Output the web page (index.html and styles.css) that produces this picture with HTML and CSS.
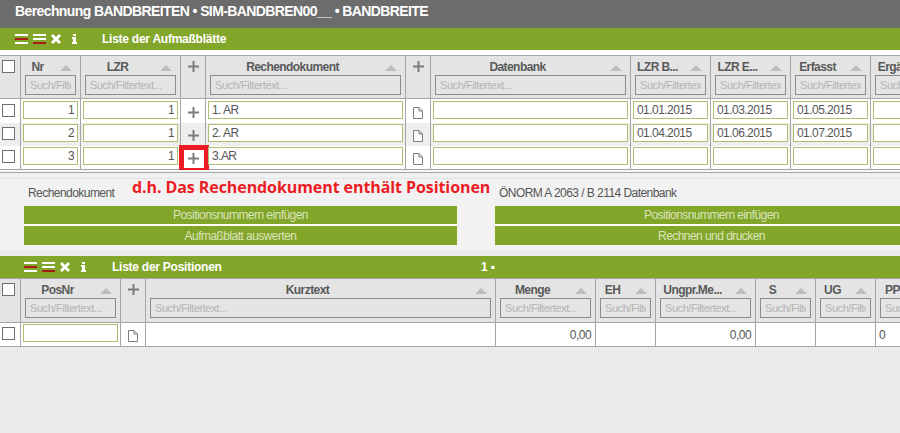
FILE: index.html
```html
<!DOCTYPE html>
<html lang="de">
<head>
<meta charset="utf-8">
<title>Berechnung BANDBREITEN</title>
<link rel="stylesheet" href="styles.css">
</head>
<body>
<svg class="defs" width="0" height="0" aria-hidden="true">
  <defs>
    <symbol id="i-collapse" viewBox="0 0 13 10"><rect y="0" width="13" height="2" fill="#fff"/><rect y="4" width="13" height="2" fill="#a81c14"/><rect y="8" width="13" height="2" fill="#fff"/></symbol>
    <symbol id="i-expand" viewBox="0 0 13 10"><rect y="0" width="13" height="2" fill="#fff"/><rect y="4" width="13" height="2" fill="#fff"/><rect y="8" width="13" height="2" fill="#a81c14"/></symbol>
    <symbol id="i-close" viewBox="0 0 10 10"><path d="M2 0 5 3 8 0 10 2 7 5 10 8 8 10 5 7 2 10 0 8 3 5 0 2Z" fill="#fff"/></symbol>
    <symbol id="i-info" viewBox="0 0 5 10"><path d="M1 0H4V2H1ZM0 3H4V8H5V10H0V8H1V5H0Z" fill="#fff"/></symbol>
    <symbol id="i-plus" viewBox="0 0 11 11"><path d="M4.5 0H6.5V4.5H11V6.5H6.5V11H4.5V6.5H0V4.5H4.5Z" fill="#7d7d7d"/></symbol>
    <symbol id="i-doc" viewBox="0 0 10 12"><path d="M.5.5H6L9.5 4V11.5H.5ZM6 .5V4H9.5" fill="#fff" stroke="#7d7d7d"/></symbol>
  </defs>
</svg>

<header class="titlebar">Berechnung BANDBREITEN • SIM-BANDBREN00__ • BANDBREITE</header>

<section class="list">
  <div class="toolbar toolbar-first">
    <div class="tools">
      <svg class="ic-bars"><use href="#i-collapse"/></svg>
      <svg class="ic-bars"><use href="#i-expand"/></svg>
      <svg class="ic-x"><use href="#i-close"/></svg>
      <svg class="ic-i"><use href="#i-info"/></svg>
    </div>
    <span class="toolbar-title">Liste der Aufmaßblätte</span>
  </div>
  <div class="table">
    <div class="row head cols-a">
      <div class="cell cb"><span class="check"></span></div>
      <div class="cell hc"><div class="ht">Nr</div><span class="sort"></span><input class="filter" placeholder="Such/Filtertext..."></div>
      <div class="cell hc"><div class="ht">LZR</div><span class="sort"></span><input class="filter" placeholder="Such/Filtertext..."></div>
      <div class="cell hp"><svg class="ic-plus"><use href="#i-plus"/></svg></div>
      <div class="cell hc"><div class="ht">Rechendokument</div><span class="sort"></span><input class="filter" placeholder="Such/Filtertext..."></div>
      <div class="cell hp"><svg class="ic-plus"><use href="#i-plus"/></svg></div>
      <div class="cell hc"><div class="ht">Datenbank</div><span class="sort"></span><input class="filter" placeholder="Such/Filtertext..."></div>
      <div class="cell hc"><div class="ht">LZR B...</div><span class="sort"></span><input class="filter" placeholder="Such/Filtertext..."></div>
      <div class="cell hc"><div class="ht">LZR E...</div><span class="sort"></span><input class="filter" placeholder="Such/Filtertext..."></div>
      <div class="cell hc"><div class="ht">Erfasst</div><span class="sort"></span><input class="filter" placeholder="Such/Filtertext..."></div>
      <div class="cell hc"><div class="ht">Ergän...</div><span class="sort"></span><input class="filter" placeholder="Such/Filtertext..."></div>
    </div>
    <div class="row body cols-a r1">
      <div class="cell cb"><span class="check"></span></div>
      <div class="cell"><input class="field num" value="1"></div>
      <div class="cell"><input class="field num" value="1"></div>
      <div class="cell ico"><svg class="ic-plus"><use href="#i-plus"/></svg></div>
      <div class="cell"><input class="field" value="1. AR"></div>
      <div class="cell ico"><svg class="ic-doc"><use href="#i-doc"/></svg></div>
      <div class="cell"><input class="field"></div>
      <div class="cell"><input class="field" value="01.01.2015"></div>
      <div class="cell"><input class="field" value="01.03.2015"></div>
      <div class="cell"><input class="field" value="01.05.2015"></div>
      <div class="cell"><input class="field"></div>
    </div>
    <div class="row body cols-a alt">
      <div class="cell cb"><span class="check"></span></div>
      <div class="cell"><input class="field num" value="2"></div>
      <div class="cell"><input class="field num" value="1"></div>
      <div class="cell ico"><svg class="ic-plus"><use href="#i-plus"/></svg></div>
      <div class="cell"><input class="field" value="2. AR"></div>
      <div class="cell ico"><svg class="ic-doc"><use href="#i-doc"/></svg></div>
      <div class="cell"><input class="field"></div>
      <div class="cell"><input class="field" value="01.04.2015"></div>
      <div class="cell"><input class="field" value="01.06.2015"></div>
      <div class="cell"><input class="field" value="01.07.2015"></div>
      <div class="cell"><input class="field"></div>
    </div>
    <div class="row body cols-a last">
      <div class="cell cb"><span class="check"></span></div>
      <div class="cell"><input class="field num" value="3"></div>
      <div class="cell"><input class="field num" value="1"></div>
      <div class="cell ico"><svg class="ic-plus"><use href="#i-plus"/></svg><span class="redbox"></span></div>
      <div class="cell"><input class="field" value="3.AR"></div>
      <div class="cell ico"><svg class="ic-doc"><use href="#i-doc"/></svg></div>
      <div class="cell"><input class="field"></div>
      <div class="cell"><input class="field"></div>
      <div class="cell"><input class="field"></div>
      <div class="cell"><input class="field"></div>
      <div class="cell"><input class="field"></div>
    </div>
  </div>
  <div class="gap"></div>
  <div class="rule"></div>
</section>

<section class="panel">
  <div class="panel-col">
    <div class="panel-head">
      <span class="panel-label">Rechendokument</span>
      <span class="note">d.h. Das Rechendokument enthält Positionen</span>
    </div>
    <button class="action">Positionsnummern einfügen</button>
    <button class="action">Aufmaßblatt auswerten</button>
  </div>
  <div class="panel-col">
    <div class="panel-head">
      <span class="panel-label">ÖNORM A 2063 / B 2114 Datenbank</span>
    </div>
    <button class="action">Positionsnummern einfügen</button>
    <button class="action">Rechnen und drucken</button>
  </div>
</section>

<section class="list">
  <div class="toolbar toolbar-second">
    <div class="tools">
      <svg class="ic-bars"><use href="#i-collapse"/></svg>
      <svg class="ic-bars"><use href="#i-expand"/></svg>
      <svg class="ic-x"><use href="#i-close"/></svg>
      <svg class="ic-i"><use href="#i-info"/></svg>
    </div>
    <span class="toolbar-title">Liste der Positionen</span>
    <span class="pager">1 ▪</span>
  </div>
  <div class="table">
    <div class="row head head-tall cols-b">
      <div class="cell cb"><span class="check"></span></div>
      <div class="cell hc"><div class="ht">PosNr</div><span class="sort"></span><input class="filter" placeholder="Such/Filtertext..."></div>
      <div class="cell hp"><svg class="ic-plus"><use href="#i-plus"/></svg></div>
      <div class="cell hc"><div class="ht">Kurztext</div><span class="sort"></span><input class="filter" placeholder="Such/Filtertext..."></div>
      <div class="cell hc"><div class="ht">Menge</div><span class="sort"></span><input class="filter" placeholder="Such/Filtertext..."></div>
      <div class="cell hc"><div class="ht">EH</div><span class="sort"></span><input class="filter" placeholder="Such/Filtertext..."></div>
      <div class="cell hc"><div class="ht">Ungpr.Me...</div><span class="sort"></span><input class="filter" placeholder="Such/Filtertext..."></div>
      <div class="cell hc"><div class="ht">S</div><span class="sort"></span><input class="filter" placeholder="Such/Filtertext..."></div>
      <div class="cell hc"><div class="ht">UG</div><span class="sort"></span><input class="filter" placeholder="Such/Filtertext..."></div>
      <div class="cell hc"><div class="ht">PP</div><span class="sort"></span><input class="filter" placeholder="Such/Filtertext..."></div>
    </div>
    <div class="row body cols-b last">
      <div class="cell cb"><span class="check"></span></div>
      <div class="cell"><input class="field"></div>
      <div class="cell ico"><svg class="ic-doc"><use href="#i-doc"/></svg></div>
      <div class="cell"></div>
      <div class="cell val num">0,00</div>
      <div class="cell"></div>
      <div class="cell val num">0,00</div>
      <div class="cell"></div>
      <div class="cell"></div>
      <div class="cell val">0</div>
    </div>
  </div>
</section>
</body>
</html>
```

FILE: styles.css
```css
* { box-sizing: border-box; }

html, body {
  margin: 0;
  height: 100%;
  overflow: hidden;
}

body {
  width: 900px;
  background: #ebebeb;
  font-family: "Liberation Sans", Arial, sans-serif;
  font-size: 12px;
  letter-spacing: -0.55px;
  color: #555;
}

.defs { position: absolute; }

.titlebar {
  height: 28px;
  padding: 3px 0 0 15px;
  background: #6c6c6c;
  color: #fff;
  font-size: 14px;
  font-weight: bold;
  letter-spacing: -0.6px;
  line-height: 16px;
  white-space: nowrap;
}

.list { background: #fff; }

.toolbar {
  display: flex;
  align-items: center;
  height: 22px;
  background: #82a62a;
  color: #fff;
  font-weight: bold;
  letter-spacing: -0.25px;
  white-space: nowrap;
}

.toolbar-first { margin-bottom: 5px; padding-left: 15px; }
.toolbar-second { padding-left: 24px; }
.toolbar-second .toolbar-title { margin-left: 1px; }

.tools {
  display: flex;
  align-items: center;
  width: 87px;
}

.ic-bars { width: 13px; height: 10px; margin-right: 5px; }
.ic-x { width: 10px; height: 10px; margin-right: 11px; }
.ic-i { width: 5px; height: 10px; }

.toolbar-title { width: 369px; }

.table {
  width: 900px;
  overflow: hidden;
  border-top: 1px solid #a6a6a6;
}

.row { display: grid; }

.cols-a { grid-template-columns: 21px 60px 100px 25px 200px 25px 200px 80px 80px 80px 80px; }
.cols-b { grid-template-columns: 21px 100px 25px 350px 100px 60px 100px 60px 60px 60px; }

.cell {
  position: relative;
  border-right: 1px solid #a6a6a6;
  min-width: 0;
}

.head {
  height: 43px;
  background: #e4e4e4;
  border-bottom: 1px solid #a6a6a6;
}

.head-tall { height: 44px; }

.body { height: 23px; background: #fff; }
.r1 { height: 24px; }
.alt { background: #eee; }
.last { height: 24px; border-bottom: 1px solid #a6a6a6; }

.hc { padding: 4px 4px 0; }

.ht {
  height: 15px;
  padding-right: 26px;
  font-weight: bold;
  letter-spacing: -0.57px;
  line-height: 15px;
  text-align: center;
  white-space: nowrap;
  color: #5a5a5a;
}

.sort {
  position: absolute;
  top: 9px;
  right: 8px;
  width: 0;
  height: 0;
  border-left: 6px solid transparent;
  border-right: 6px solid transparent;
  border-bottom: 6px solid #bdbdbd;
}

.filter {
  display: block;
  width: 100%;
  height: 20px;
  padding: 0 4px;
  margin: 0;
  border: 1px solid #8c8c8c;
  border-radius: 0;
  outline: 0;
  background: transparent;
  font: 11px "Liberation Sans", Arial, sans-serif;
  letter-spacing: -0.43px;
}

.filter::placeholder { color: #b4b4b4; opacity: 1; }

.field {
  display: block;
  width: calc(100% - 4px);
  height: 18px;
  margin: 1px 0 0 2px;
  padding: 0 3px;
  border: 1px solid #a9c170;
  border-radius: 0;
  outline: 0;
  background: #fff;
  color: #555;
  font: 12px "Liberation Sans", Arial, sans-serif;
  letter-spacing: -0.55px;
}

.r1 .field { margin-top: 2px; }
.field.num { text-align: right; }

.cb { padding: 4px 0 0 2px; }
.r1 .cb { padding-top: 5px; }

.check {
  display: block;
  width: 13px;
  height: 13px;
  border: 1px solid #6f6f6f;
  background: #fff;
}

.hp { display: flex; justify-content: center; padding-top: 5px; }
.ico { display: flex; justify-content: center; padding-top: 7px; }
.r1 .ico { padding-top: 8px; }
.ic-plus { width: 11px; height: 11px; }
.ic-doc { width: 10px; height: 12px; }

.redbox {
  position: absolute;
  left: -2px;
  top: -1px;
  width: 30px;
  height: 28px;
  border: 5px solid #ed1c24;
}

.val { padding: 5px 0 0 3px; line-height: 14px; }
.val.num { padding: 5px 4px 0 0; text-align: right; }

.gap { height: 2px; background: #f6f6f6; }

.rule {
  height: 7px;
  border-top: 1px solid #a6a6a6;
  border-bottom: 1px solid #e4e4e4;
  background: #f0f0f0;
}

.panel {
  display: grid;
  grid-template-columns: 433px 433px;
  column-gap: 38px;
  height: 70px;
  margin-bottom: 7px;
  padding: 0 0 0 24px;
  background: #f2f2f2;
}

.panel-head {
  position: relative;
  height: 27px;
}

.panel-label {
  position: absolute;
  left: 4px;
  top: 7px;
  line-height: 14px;
  white-space: nowrap;
}

.note {
  position: absolute;
  left: 108px;
  top: -2px;
  color: #ed1c24;
  font-family: "Open Sans", sans-serif;
  font-size: 16px;
  font-weight: bold;
  letter-spacing: -0.08px;
  line-height: 20px;
  white-space: nowrap;
}

.action {
  display: block;
  width: 433px;
  height: 18px;
  margin: 0;
  padding: 0;
  border: 0;
  border-radius: 0;
  background: #82a62a;
  color: #dbe4bd;
  font: 12px/18px "Liberation Sans", Arial, sans-serif;
  letter-spacing: -0.55px;
  text-align: center;
}

.action + .action {
  height: 21px;
  border-top: 2px solid #fff;
}
```
